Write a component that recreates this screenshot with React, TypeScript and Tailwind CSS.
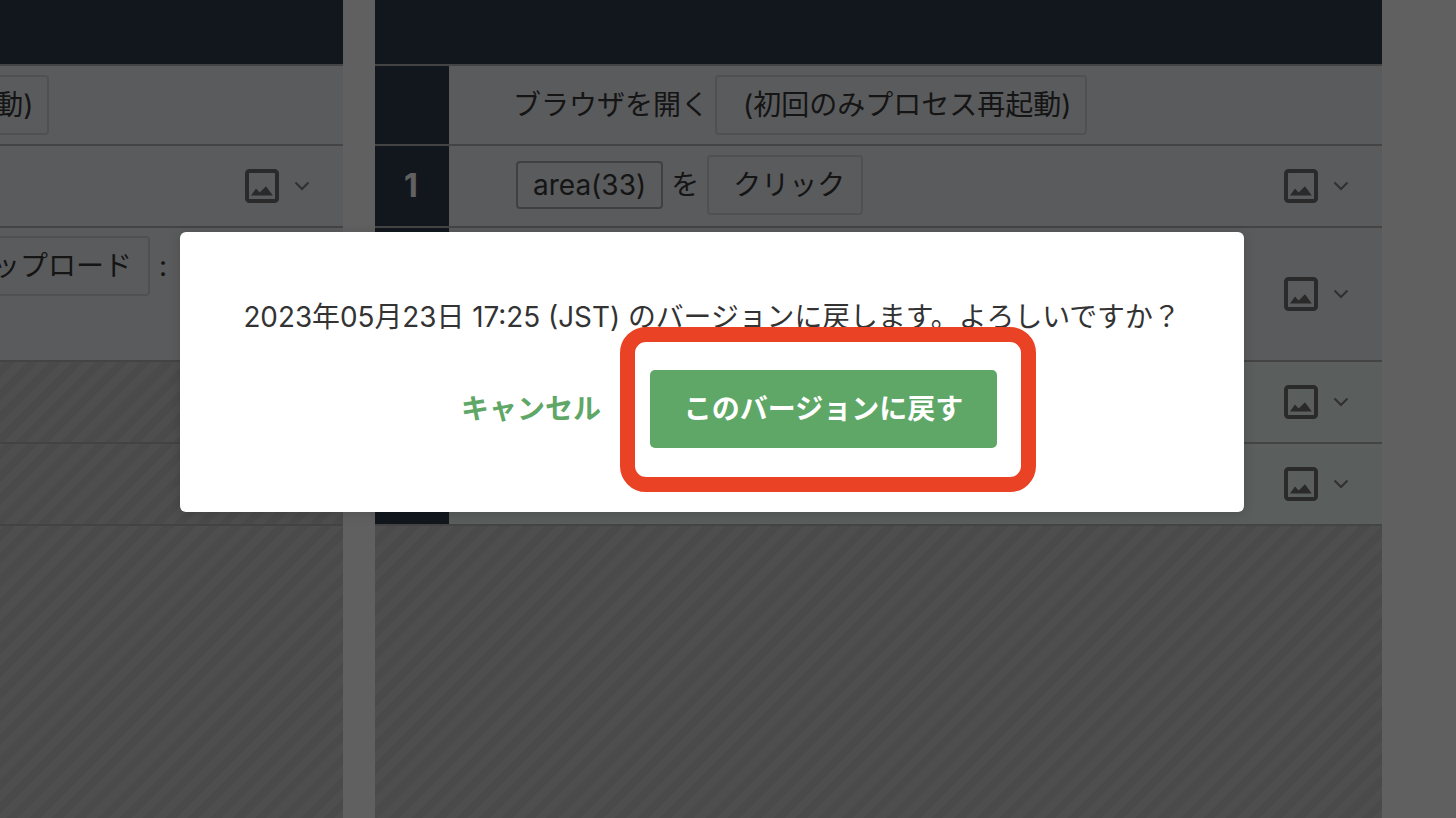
const jp = "font-['Inter','Noto_Sans_CJK_JP',sans-serif]";

function ImgIcon() {
  return (
    <svg width="34" height="34" viewBox="0 0 34 34" className="shrink-0">
      <rect x="2" y="2" width="30" height="30" rx="2.5" fill="none" stroke="#6e6e6e" strokeWidth="4" />
      <path d="M6 26.4 L11 19.6 L14.6 23.4 L21 17.2 L27.8 26.4 Z" fill="#6e6e6e" />
    </svg>
  );
}

function Chevron() {
  return (
    <svg width="16" height="10" viewBox="0 0 16 10" className="shrink-0">
      <path d="M1.5 1.5 L8 8 L14.5 1.5" fill="none" stroke="#7e7e7e" strokeWidth="2" />
    </svg>
  );
}

function Icons() {
  return (
    <div className="ml-auto flex items-center gap-[15px] pr-[33px]">
      <ImgIcon />
      <Chevron />
    </div>
  );
}

function Chip({ pad, children }: { pad: string; children: React.ReactNode }) {
  return (
    <span className={`inline-flex h-[60px] items-center rounded-[4px] border-2 border-[#d2d2d2] whitespace-nowrap ${pad}`}>
      {children}
    </span>
  );
}

function Row({
  h,
  num,
  tint = false,
  children,
}: {
  h: string;
  num?: string;
  tint?: boolean;
  children?: React.ReactNode;
}) {
  return (
    <div className={`flex border-b-2 border-[#b4b4b4] ${h} ${tint ? "bg-[#edf7f2]" : "bg-[#edeef2]"}`}>
      <div className="flex w-[74px] shrink-0 items-center justify-center pr-[2px] bg-[#313d50] text-[32px] font-bold text-white">
        {num}
      </div>
      <div className="flex min-w-0 flex-1 items-center pl-[64px]">{children}</div>
    </div>
  );
}

const hatch =
  "bg-[repeating-linear-gradient(135deg,#cccccc_0,#cccccc_8px,#c2c2c2_8px,#c2c2c2_16px)]";

function HatchRow({ h }: { h: string }) {
  return <div className={`border-b-2 border-[#b0b0b0] ${h} ${hatch}`} />;
}

function Header() {
  return <div className="h-[66px] border-b-2 border-[#b4b4b4] bg-[#313d50]" />;
}

function OpenBrowser() {
  return (
    <div className="flex items-center gap-[6px]">
      <span>ブラウザを開く</span>
      <Chip pad="pl-[26px] pr-[14px]">(初回のみプロセス再起動)</Chip>
    </div>
  );
}

export default function App() {
  return (
    <div className={`relative h-[818px] w-[1456px] overflow-hidden bg-[#fbfbfb] text-[28px] text-[#383838] ${jp}`}>
      <div className="ml-[-663px] flex h-full gap-[32px]">
        <div className="flex w-[1006px] shrink-0 flex-col">
          <Header />
          <Row h="h-[80px]">
            <OpenBrowser />
          </Row>
          <Row h="h-[82px]">
            <Icons />
          </Row>
          <Row h="h-[134px]">
            <div className="ml-[461px] flex items-center gap-[9px] self-start pt-[8px]">
              <Chip pad="pl-[26px] pr-[16px]">アップロード</Chip>
              <span>:</span>
            </div>
          </Row>
          <HatchRow h="h-[82px]" />
          <HatchRow h="h-[82px]" />
          <div className={`flex-1 ${hatch}`} />
        </div>

        <div className="flex w-[1007px] shrink-0 flex-col">
          <Header />
          <Row h="h-[80px]">
            <OpenBrowser />
          </Row>
          <Row h="h-[82px]" num="1">
            <div className="mb-[2px] flex items-center gap-[8px] pl-[3px]">
              <span className="inline-flex h-[48px] items-center rounded-[4px] border-2 border-[#a8a8a8] px-[15px] whitespace-nowrap">
                area(33)
              </span>
              <span>を</span>
              <Chip pad="pl-[24px] pr-[16px]">クリック</Chip>
            </div>
            <Icons />
          </Row>
          <Row h="h-[134px]">
            <Icons />
          </Row>
          <Row h="h-[82px]" tint>
            <Icons />
          </Row>
          <Row h="h-[82px]" tint>
            <Icons />
          </Row>
          <div className={`flex-1 ${hatch}`} />
        </div>

        <div className="flex flex-1 pl-[49px]">
          <div className="h-full w-[2px] bg-[#eeeeee]" />
        </div>
      </div>

      <div className="absolute inset-0 flex items-start justify-center bg-black/[0.62] pr-[32px] pt-[232px]">
        <div className="relative h-[280px] w-[1064px] rounded-[6px] bg-white shadow-[0_2px_12px_rgba(0,0,0,0.15)]">
          <p className="pt-[66px] text-center text-[27.85px] leading-[38px] text-[#333] whitespace-nowrap">
            2023年05月23日 17:25 (JST) のバージョンに戻します。よろしいですか？
          </p>
          <div className="mt-[34px] flex items-center gap-[49px] pl-[281px]">
            <span className="font-bold text-[#5ea766]">キャンセル</span>
            <button className="flex h-[78px] w-[347px] items-center justify-center rounded-[5px] bg-[#5ea766] font-bold text-white">
              このバージョンに戻す
            </button>
          </div>
          <div className="absolute left-[440px] top-[95px] h-[165px] w-[416px] rounded-[26px] border-[15px] border-[#ea4225]" />
        </div>
      </div>
    </div>
  );
}
